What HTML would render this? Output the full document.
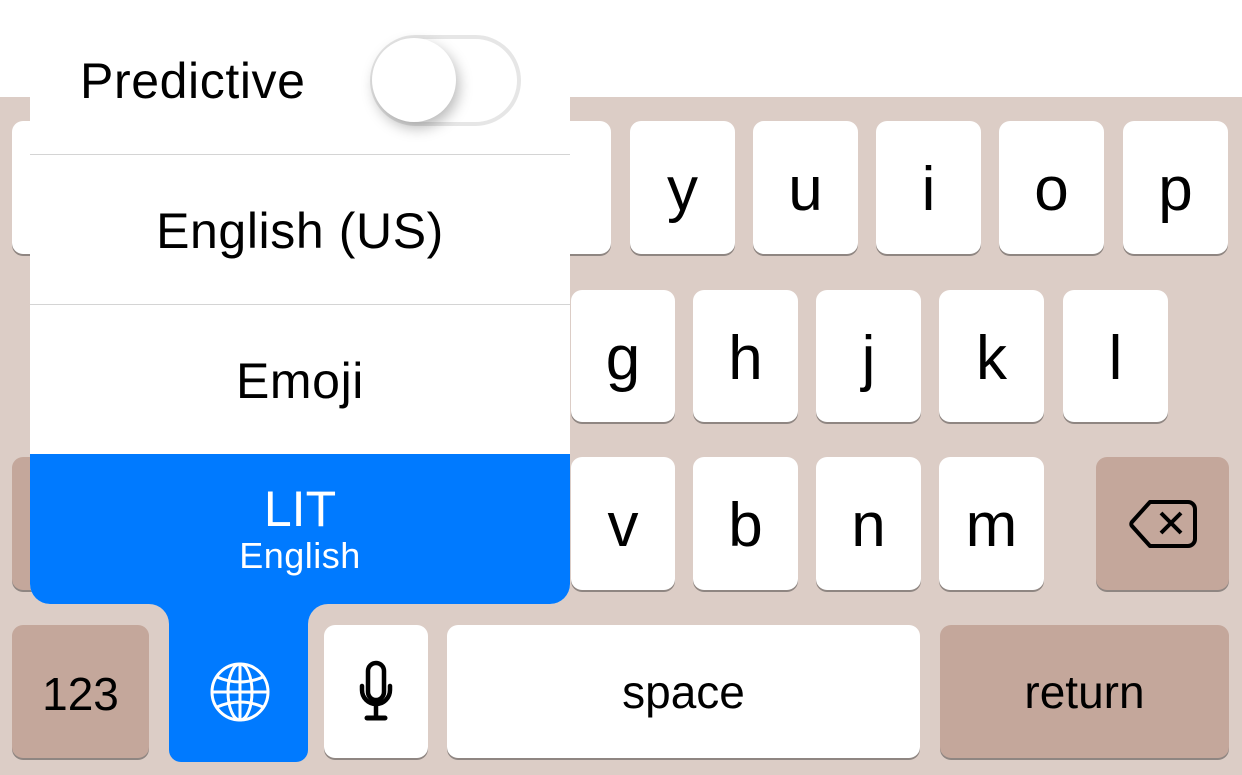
<!DOCTYPE html>
<html><head><style>
*{margin:0;padding:0;box-sizing:border-box}
body{width:1242px;height:775px;overflow:hidden;background:#fff;font-family:"Liberation Sans",sans-serif;position:relative}
.kb{position:absolute;left:0;top:97px;width:1242px;height:678px;background:#dccdc6}
.k{position:absolute;background:#fff;border-radius:11px;box-shadow:0 2px 0 #8f8682;display:flex;align-items:center;justify-content:center;font-size:62px;color:#000;padding-top:4px}
.d{background:#c4a79b}
.pop{position:absolute;left:30px;top:0;width:540px;height:604px;background:#fff;border-radius:0 0 20px 20px;overflow:hidden}
.sep{position:absolute;left:0;width:540px;height:1px;background:#d4d4d4}
.row{position:absolute;left:0;width:540px;text-align:center;font-size:50px;letter-spacing:0.6px;color:#000}
.blue{position:absolute;left:0;top:454px;width:540px;height:150px;background:#007aff;color:#fff;text-align:center}
.stem{position:absolute;left:169px;top:590px;width:139px;height:172px;background:#007aff;border-radius:0 0 12px 12px}
</style></head><body>
<div class="kb"></div>
<div class="k" style="left:12px;top:121px;width:100px;height:133px"></div>
<div class="k" style="left:510px;top:121px;width:101px;height:133px"></div>
<div class="k" style="left:630px;top:121px;width:105px;height:133px">y</div>
<div class="k" style="left:753px;top:121px;width:105px;height:133px">u</div>
<div class="k" style="left:876px;top:121px;width:105px;height:133px">i</div>
<div class="k" style="left:999px;top:121px;width:105px;height:133px">o</div>
<div class="k" style="left:1123px;top:121px;width:105px;height:133px">p</div>
<div class="k" style="left:571px;top:290px;width:104px;height:132px">g</div>
<div class="k" style="left:693px;top:290px;width:105px;height:132px">h</div>
<div class="k" style="left:816px;top:290px;width:105px;height:132px">j</div>
<div class="k" style="left:939px;top:290px;width:105px;height:132px">k</div>
<div class="k" style="left:1063px;top:290px;width:105px;height:132px">l</div>
<div class="k d" style="left:12px;top:457px;width:100px;height:133px"></div>
<div class="k" style="left:571px;top:457px;width:104px;height:133px">v</div>
<div class="k" style="left:693px;top:457px;width:105px;height:133px">b</div>
<div class="k" style="left:816px;top:457px;width:105px;height:133px">n</div>
<div class="k" style="left:939px;top:457px;width:105px;height:133px">m</div>
<div class="k d" style="left:1096px;top:457px;width:133px;height:133px;padding-top:0"><svg width="70" height="50" viewBox="0 0 70 50"><path d="M22 3 H60 a7 7 0 0 1 7 7 V40 a7 7 0 0 1 -7 7 H22 L4 27 a3 3 0 0 1 0 -4 Z" fill="none" stroke="#000" stroke-width="4" stroke-linejoin="round"/><path d="M33 14 L53 34 M53 14 L33 34" stroke="#000" stroke-width="4"/></svg></div>
<div class="k d" style="left:12px;top:625px;width:137px;height:133px;font-size:46px">123</div>
<div class="k" style="left:324px;top:625px;width:104px;height:133px;padding-top:0"><svg width="36" height="64" viewBox="0 0 36 64"><rect x="10" y="3" width="16" height="37" rx="8" fill="none" stroke="#000" stroke-width="4.5"/><path d="M4 26 v4 a14 14 0 0 0 28 0 v-4 M18 45 v12" fill="none" stroke="#000" stroke-width="4.5" stroke-linecap="round"/><path d="M9 58 h18" stroke="#000" stroke-width="5" stroke-linecap="round"/></svg></div>
<div class="k" style="left:447px;top:625px;width:473px;height:133px;font-size:46px;padding-top:0">space</div>
<div class="k d" style="left:940px;top:625px;width:289px;height:133px;font-size:46px;padding-top:0">return</div>
<div class="pop">
  <div class="row" style="top:52px;left:50px;width:auto;text-align:left">Predictive</div>
  <div style="position:absolute;left:340px;top:35px;width:151px;height:91px;border-radius:46px;border:4px solid #e6e6e6;background:#fff"></div>
  <div style="position:absolute;left:342px;top:38px;width:84px;height:84px;border-radius:50%;background:#fff;box-shadow:3px 6px 14px rgba(0,0,0,.28)"></div>
  <div class="sep" style="top:154px"></div>
  <div class="row" style="top:202px">English (US)</div>
  <div class="sep" style="top:304px"></div>
  <div class="row" style="top:352px">Emoji</div>
  <div class="blue"><div style="font-size:50px;margin-top:28px;line-height:54px">LIT</div><div style="font-size:36px;line-height:40px;letter-spacing:0.5px">English</div></div>
</div>
<div class="stem"></div>
<svg style="position:absolute;left:149px;top:604px" width="20" height="20"><path d="M0 0 H20 V20 A20 20 0 0 0 0 0Z" fill="#007aff"/></svg>
<svg style="position:absolute;left:308px;top:604px" width="20" height="20"><path d="M0 0 H20 A20 20 0 0 0 0 20Z" fill="#007aff"/></svg>
<svg style="position:absolute;left:209px;top:661px" width="62" height="62" viewBox="0 0 62 62" fill="none" stroke="#fff" stroke-width="3"><circle cx="31" cy="31" r="28"/><ellipse cx="31" cy="31" rx="12" ry="28"/><path d="M31 3 V59 M3 31 H59 M8 16 Q31 26 54 16 M8 46 Q31 36 54 46"/></svg>
</body></html>
